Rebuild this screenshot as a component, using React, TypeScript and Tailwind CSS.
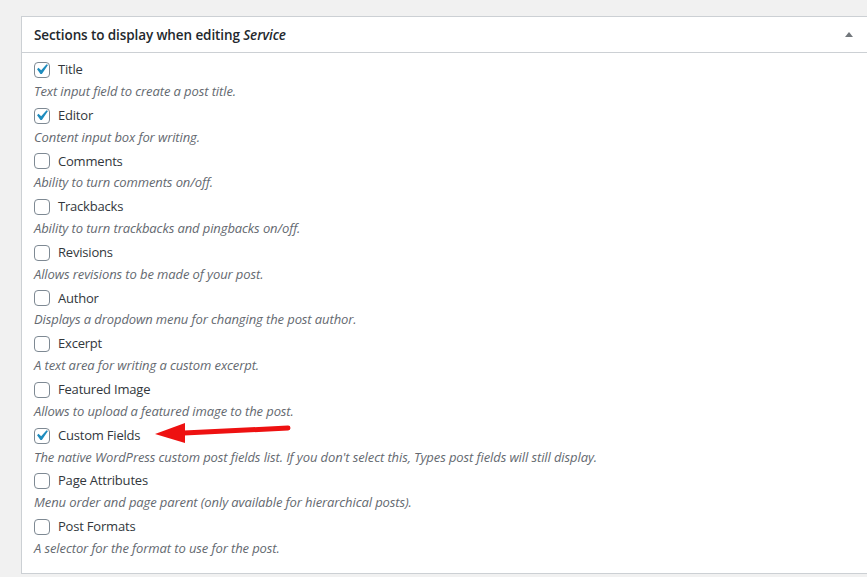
const items = [
  { label: 'Title', desc: 'Text input field to create a post title.', checked: true },
  { label: 'Editor', desc: 'Content input box for writing.', checked: true },
  { label: 'Comments', desc: 'Ability to turn comments on/off.', checked: false },
  { label: 'Trackbacks', desc: 'Ability to turn trackbacks and pingbacks on/off.', checked: false },
  { label: 'Revisions', desc: 'Allows revisions to be made of your post.', checked: false },
  { label: 'Author', desc: 'Displays a dropdown menu for changing the post author.', checked: false },
  { label: 'Excerpt', desc: 'A text area for writing a custom excerpt.', checked: false },
  { label: 'Featured Image', desc: 'Allows to upload a featured image to the post.', checked: false },
  {
    label: 'Custom Fields',
    desc: "The native WordPress custom post fields list. If you don't select this, Types post fields will still display.",
    checked: true,
  },
  { label: 'Page Attributes', desc: 'Menu order and page parent (only available for hierarchical posts).', checked: false },
  { label: 'Post Formats', desc: 'A selector for the format to use for the post.', checked: false },
];

const Checkbox = ({ checked }: { checked: boolean }) => (
  <span className="relative block h-[16px] w-[16px] shrink-0 rounded-[4px] border border-[#7e8993] bg-white">
    {checked && (
      <svg viewBox="0 0 20 20" className="absolute left-[-4px] top-[-4px] h-[21px] w-[21px]">
        <path d="M14.83 4.89l1.34.94-5.81 8.38H9.02L5.78 9.67l1.34-1.25 2.57 2.4z" fill="#1e8cbe" />
      </svg>
    )}
  </span>
);

export default function App() {
  return (
    <div className="relative h-[577px] overflow-hidden bg-[#f1f1f1] pl-[21px] pt-[16px] font-['Open_Sans','Noto_Sans',sans-serif]">
      <div className="w-[900px] border border-[#ccd0d4] bg-white">
        <div className="flex h-[36px] items-center border-b border-[#ccd0d4] pl-[12px] pr-[67px]">
          <h2 className="mt-[2px] text-[13.5px] font-semibold tracking-[-0.1px] text-[#23282d]">
            Sections to display when editing <i>Service</i>
          </h2>
          <svg viewBox="0 0 8 5" className="ml-auto h-[5px] w-[8px]">
            <path d="M0 5 L4 0 L8 5 Z" fill="#72777c" />
          </svg>
        </div>
        <div className="px-[12px] pb-[12px] pt-[5px]">
          {items.map((it) => (
            <div key={it.label}>
              <label className="flex h-[24px] items-center gap-[8px] text-[13px] tracking-[-0.2px] text-[#32373c]">
                <Checkbox checked={it.checked} />
                {it.label}
              </label>
              <p className="h-[21.7px] text-[13px] italic leading-[18px] tracking-[-0.1px] text-[#646970]">
                {it.desc}
              </p>
            </div>
          ))}
        </div>
      </div>
      <svg className="pointer-events-none absolute left-[150px] top-[418px]" width="145" height="30" viewBox="0 0 145 30">
        <path d="M34 15 L138 10" stroke="#ee1111" strokeWidth="5" strokeLinecap="round" />
        <path d="M5 16 L35 5 L35 25 Z" fill="#ee1111" />
      </svg>
    </div>
  );
}
